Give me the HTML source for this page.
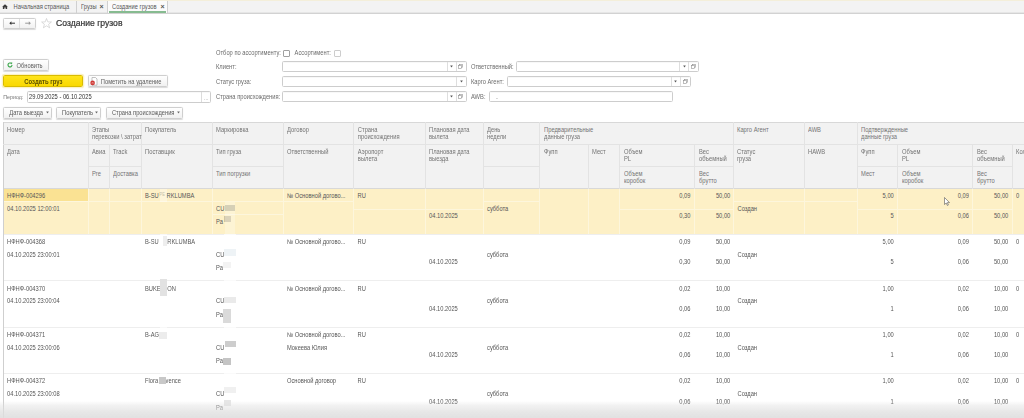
<!DOCTYPE html>
<html><head><meta charset="utf-8">
<style>
html,body{margin:0;padding:0;}
body{width:1024px;height:418px;overflow:hidden;position:relative;background:#fff;font-family:"Liberation Sans",sans-serif;}
.t{position:absolute;white-space:nowrap;font-size:5.75px;line-height:10px;height:10px;color:#565656;transform:scaleY(1.12);transform-origin:0 50%;}
.r{text-align:right;}
.b{position:absolute;box-sizing:border-box;}
.h{color:#747474;}
.btn{position:absolute;box-sizing:border-box;border:1px solid #cfcfcf;border-radius:1.5px;background:linear-gradient(#ffffff,#f1f1f1);box-shadow:0 0.5px 1px rgba(0,0,0,0.15);}
.inp{position:absolute;box-sizing:border-box;border:1px solid #cdcdcd;background:#fff;border-radius:1.5px;box-shadow:inset 0 0.5px 0.5px rgba(0,0,0,0.06);}
#w{position:absolute;left:0;top:0;width:1024px;height:418px;filter:blur(0.3px);}
.h{font-size:5.8px;}
.bl,.bl2,.bl3{color:transparent;background:rgba(200,200,200,0.55);filter:blur(0.6px);}
</style></head><body><div id="w">

<div class="b" style="left:0.0px;top:0.0px;width:1024.0px;height:1.0px;background:#f4efda"></div>
<div class="b" style="left:0.0px;top:1.0px;width:1024.0px;height:12.5px;background:#f3f3f3"></div>
<div class="b" style="left:0.0px;top:12.0px;width:1024.0px;height:1.0px;background:#e6e6e6"></div>
<div class="b" style="left:0.0px;top:13.0px;width:1024.0px;height:1.0px;background:#d2d2d2"></div>
<svg class="b" style="left:2.4px;top:3.6px" width="6" height="5.4" viewBox="0 0 7 6"><path d="M3.5 0.2 L0.2 3 L1 3 L1 5.8 L2.8 5.8 L2.8 4 L4.2 4 L4.2 5.8 L6 5.8 L6 3 L6.8 3 Z" fill="#3c3c3c"/></svg>
<div class="t " style="left:13.5px;top:2.4px;color:#555">Начальная страница</div>
<div class="b" style="left:76.0px;top:1.0px;width:1.0px;height:12.0px;background:#d0d0d0"></div>
<div class="t " style="left:81.0px;top:2.4px;color:#555">Грузы</div>
<div class="t " style="left:99.5px;top:2.4px;color:#555;font-size:7px;font-weight:bold">×</div>
<div class="b" style="left:107.0px;top:1.0px;width:1.0px;height:12.0px;background:#d0d0d0"></div>
<div class="b" style="left:108.2px;top:1.0px;width:59.1px;height:12.0px;background:#fbfbfb"></div>
<div class="t " style="left:112.0px;top:2.4px;color:#555">Создание грузов</div>
<div class="t " style="left:160.5px;top:2.4px;color:#555;font-size:7px;font-weight:bold">×</div>
<div class="b" style="left:167.0px;top:1.0px;width:1.0px;height:12.0px;background:#d0d0d0"></div>
<div class="b" style="left:109.2px;top:11.4px;width:57.0px;height:1.3px;background:#86bb90"></div>
<div class="btn" style="left:3.2px;top:18px;width:32.4px;height:10.7px"></div>
<div class="b" style="left:19.0px;top:18.5px;width:1.0px;height:9.5px;background:#dedede"></div>
<svg class="b" style="left:8.7px;top:21.2px" width="6.2" height="4.4" viewBox="0 0 6.2 4.4"><path d="M0.3 2.2 L2.4 0.3 L2.4 4.1 Z" fill="#333"/><path d="M1.5 2.2 L6 2.2" stroke="#333" stroke-width="1" fill="none"/></svg>
<svg class="b" style="left:24.5px;top:21.2px" width="6.2" height="4.4" viewBox="0 0 6.2 4.4"><path d="M5.9 2.2 L3.8 0.3 L3.8 4.1 Z" fill="#999"/><path d="M0.2 2.2 L4.7 2.2" stroke="#999" stroke-width="1" fill="none"/></svg>
<svg class="b" style="left:40.5px;top:18px" width="11" height="10.5" viewBox="0 0 22 21"><path d="M11 1 L13.6 7.8 L20.8 8 L15.2 12.6 L17.2 19.6 L11 15.6 L4.8 19.6 L6.8 12.6 L1.2 8 L8.4 7.8 Z" stroke="#c4c4c4" stroke-width="1.2" fill="none"/></svg>
<div class="t " style="left:56.0px;top:18.3px;font-size:8.6px;color:#383838;-webkit-text-stroke:0.22px #383838">Создание грузов</div>
<div class="btn" style="left:3.2px;top:59.2px;width:45.4px;height:11.4px"></div>
<svg class="b" style="left:7px;top:62px" width="6" height="6" viewBox="0 0 12 12"><path d="M10 6 A4 4 0 1 1 8.5 2.8" stroke="#3aa64a" stroke-width="2.2" fill="none"/><path d="M7 0.5 L11 1.5 L9 5 Z" fill="#3aa64a"/></svg>
<div class="t " style="left:16.5px;top:60.6px;color:#606060">Обновить</div>
<div class="b" style="left:3.2px;top:75.3px;width:79.8px;height:11.7px;background:linear-gradient(#ffe41a,#f9d800);border:1px solid #d9bc00;border-radius:1.5px;box-shadow:0 0 0 1.3px #fbf1c6"></div>
<div class="t " style="left:24.2px;top:76.6px;font-size:5.95px;font-weight:bold;color:#5b5000">Создать груз</div>
<div class="btn" style="left:88px;top:75.4px;width:80px;height:11.8px"></div>
<svg class="b" style="left:90.4px;top:76.6px" width="7.5" height="9" viewBox="0 0 7.5 9"><path d="M2 0.5 L5.5 0.5 L7 2 L7 8.2 L2 8.2 Z" fill="#fff" stroke="#9a9a9a" stroke-width="0.6"/><circle cx="2.6" cy="5.9" r="2.3" fill="#cf3a36"/><path d="M1.9 5.2 L3.3 6.6 M3.3 5.2 L1.9 6.6" stroke="#f6d0d0" stroke-width="0.55"/></svg>
<div class="t " style="left:100.8px;top:76.7px;color:#606060">Пометить на удаление</div>
<div class="t " style="left:3.2px;top:92.2px;color:#777;font-size:5.35px">Период:</div>
<div class="inp" style="left:27px;top:91.2px;width:184.2px;height:11.6px"></div>
<div class="b" style="left:201.0px;top:92.0px;width:1.0px;height:10.0px;background:#dcdcdc"></div>
<div class="t " style="left:204.0px;top:92.9px;color:#888;font-size:5px">...</div>
<div class="t " style="left:29.0px;top:92.3px;color:#333">29.09.2025 - 06.10.2025</div>
<div class="btn" style="left:3.3px;top:106.5px;width:48.7px;height:12px"></div>
<div class="t " style="left:9.3px;top:107.9px;color:#5a5a5a">Дата выезда</div>
<svg class="b" style="left:46.0px;top:111.3px" width="3" height="3" viewBox="0 0 3 3"><path d="M0.2 0.6 L2.8 0.6 L1.5 2.6 Z" fill="#666"/></svg>
<div class="btn" style="left:56.1px;top:106.5px;width:45.1px;height:12px"></div>
<div class="t " style="left:62.1px;top:107.9px;color:#5a5a5a">Покупатель</div>
<svg class="b" style="left:95.2px;top:111.3px" width="3" height="3" viewBox="0 0 3 3"><path d="M0.2 0.6 L2.8 0.6 L1.5 2.6 Z" fill="#666"/></svg>
<div class="btn" style="left:105.9px;top:106.5px;width:77.1px;height:12px"></div>
<div class="t " style="left:111.9px;top:107.9px;color:#5a5a5a">Страна происхождения</div>
<svg class="b" style="left:177.0px;top:111.3px" width="3" height="3" viewBox="0 0 3 3"><path d="M0.2 0.6 L2.8 0.6 L1.5 2.6 Z" fill="#666"/></svg>
<div class="t " style="left:216.0px;top:48.3px;color:#6c6c6c">Отбор по ассортименту:</div>
<div class="b" style="left:283.2px;top:49.8px;width:6.6px;height:6.8px;border:1px solid #a0a0a0;background:#fff;border-radius:1px"></div>
<div class="t " style="left:294.6px;top:48.3px;color:#6c6c6c">Ассортимент:</div>
<div class="b" style="left:334.2px;top:49.8px;width:6.6px;height:6.8px;border:1px solid #cdcdcd;background:#fff;border-radius:1px"></div>
<div class="t " style="left:216.0px;top:62.1px;color:#6c6c6c">Клиент:</div>
<div class="inp" style="left:282.4px;top:61.1px;width:184.2px;height:11.3px"></div>
<div class="b" style="left:456.0px;top:62.1px;width:1.0px;height:9.3px;background:#dedede"></div>
<svg class="b" style="left:458.3px;top:64.1px" width="5" height="5" viewBox="0 0 10 10"><rect x="3" y="0.8" width="6" height="6" fill="none" stroke="#888" stroke-width="1.1"/><rect x="1" y="3" width="6" height="6" fill="#fff" stroke="#888" stroke-width="1.1"/></svg>
<div class="b" style="left:447.0px;top:62.1px;width:1.0px;height:9.3px;background:#dedede"></div>
<svg class="b" style="left:450.1px;top:65.3px" width="3" height="3" viewBox="0 0 3 3"><path d="M0.2 0.5 L2.8 0.5 L1.5 2.6 Z" fill="#555"/></svg>
<div class="t " style="left:216.0px;top:76.9px;color:#6c6c6c">Статус груза:</div>
<div class="inp" style="left:282.4px;top:76.2px;width:184.2px;height:11.3px"></div>
<div class="b" style="left:456.0px;top:77.2px;width:1.0px;height:9.3px;background:#dedede"></div>
<svg class="b" style="left:460.1px;top:80.4px" width="3" height="3" viewBox="0 0 3 3"><path d="M0.2 0.5 L2.8 0.5 L1.5 2.6 Z" fill="#555"/></svg>
<div class="t " style="left:216.0px;top:92.2px;color:#6c6c6c">Страна происхождения:</div>
<div class="inp" style="left:282.4px;top:91.2px;width:184.2px;height:11.3px"></div>
<div class="b" style="left:456.0px;top:92.2px;width:1.0px;height:9.3px;background:#dedede"></div>
<svg class="b" style="left:458.3px;top:94.2px" width="5" height="5" viewBox="0 0 10 10"><rect x="3" y="0.8" width="6" height="6" fill="none" stroke="#888" stroke-width="1.1"/><rect x="1" y="3" width="6" height="6" fill="#fff" stroke="#888" stroke-width="1.1"/></svg>
<div class="b" style="left:447.0px;top:92.2px;width:1.0px;height:9.3px;background:#dedede"></div>
<svg class="b" style="left:450.1px;top:95.4px" width="3" height="3" viewBox="0 0 3 3"><path d="M0.2 0.5 L2.8 0.5 L1.5 2.6 Z" fill="#555"/></svg>
<div class="t " style="left:471.0px;top:62.1px;color:#6c6c6c">Ответственный:</div>
<div class="inp" style="left:515.5px;top:61.1px;width:183.7px;height:11.3px"></div>
<div class="b" style="left:688.0px;top:62.1px;width:1.0px;height:9.3px;background:#dedede"></div>
<svg class="b" style="left:690.9px;top:64.1px" width="5" height="5" viewBox="0 0 10 10"><rect x="3" y="0.8" width="6" height="6" fill="none" stroke="#888" stroke-width="1.1"/><rect x="1" y="3" width="6" height="6" fill="#fff" stroke="#888" stroke-width="1.1"/></svg>
<div class="b" style="left:679.0px;top:62.1px;width:1.0px;height:9.3px;background:#dedede"></div>
<svg class="b" style="left:682.7px;top:65.3px" width="3" height="3" viewBox="0 0 3 3"><path d="M0.2 0.5 L2.8 0.5 L1.5 2.6 Z" fill="#555"/></svg>
<div class="t " style="left:471.0px;top:76.9px;color:#6c6c6c">Карго Агент:</div>
<div class="inp" style="left:507.2px;top:76.2px;width:183.6px;height:11.3px"></div>
<div class="b" style="left:680.0px;top:77.2px;width:1.0px;height:9.3px;background:#dedede"></div>
<svg class="b" style="left:682.5px;top:79.2px" width="5" height="5" viewBox="0 0 10 10"><rect x="3" y="0.8" width="6" height="6" fill="none" stroke="#888" stroke-width="1.1"/><rect x="1" y="3" width="6" height="6" fill="#fff" stroke="#888" stroke-width="1.1"/></svg>
<div class="b" style="left:671.0px;top:77.2px;width:1.0px;height:9.3px;background:#dedede"></div>
<svg class="b" style="left:674.3px;top:80.4px" width="3" height="3" viewBox="0 0 3 3"><path d="M0.2 0.5 L2.8 0.5 L1.5 2.6 Z" fill="#555"/></svg>
<div class="t " style="left:471.0px;top:92.2px;color:#6c6c6c">AWB:</div>
<div class="inp" style="left:489.3px;top:91.2px;width:183.4px;height:11.3px"></div>
<div class="t " style="left:496.0px;top:92.7px;color:#999">-</div>
<div class="b" style="left:3.0px;top:122.3px;width:1021.0px;height:66.4px;background:#f2f2f2"></div>
<div class="b" style="left:3.0px;top:122.0px;width:1021.0px;height:1.0px;background:#d8d8d8"></div>
<div class="b" style="left:3.0px;top:188.0px;width:1021.0px;height:1.0px;background:#d8d8d8"></div>
<div class="b" style="left:3.0px;top:122.3px;width:1.0px;height:295.7px;background:#cfcfcf"></div>
<div class="b" style="left:88.0px;top:122.3px;width:1.0px;height:66.4px;background:#e3e3e3"></div>
<div class="b" style="left:141.0px;top:122.3px;width:1.0px;height:66.4px;background:#e3e3e3"></div>
<div class="b" style="left:212.0px;top:122.3px;width:1.0px;height:66.4px;background:#e3e3e3"></div>
<div class="b" style="left:283.0px;top:122.3px;width:1.0px;height:66.4px;background:#e3e3e3"></div>
<div class="b" style="left:353.0px;top:122.3px;width:1.0px;height:66.4px;background:#e3e3e3"></div>
<div class="b" style="left:425.0px;top:122.3px;width:1.0px;height:66.4px;background:#e3e3e3"></div>
<div class="b" style="left:483.0px;top:122.3px;width:1.0px;height:66.4px;background:#e3e3e3"></div>
<div class="b" style="left:539.0px;top:122.3px;width:1.0px;height:66.4px;background:#e3e3e3"></div>
<div class="b" style="left:733.0px;top:122.3px;width:1.0px;height:66.4px;background:#e3e3e3"></div>
<div class="b" style="left:804.0px;top:122.3px;width:1.0px;height:66.4px;background:#e3e3e3"></div>
<div class="b" style="left:857.0px;top:122.3px;width:1.0px;height:66.4px;background:#e3e3e3"></div>
<div class="b" style="left:1012.0px;top:144.4px;width:1.0px;height:44.3px;background:#e3e3e3"></div>
<div class="b" style="left:109.0px;top:144.4px;width:1.0px;height:44.3px;background:#e3e3e3"></div>
<div class="b" style="left:588.0px;top:144.4px;width:1.0px;height:44.3px;background:#e3e3e3"></div>
<div class="b" style="left:619.0px;top:144.4px;width:1.0px;height:44.3px;background:#e3e3e3"></div>
<div class="b" style="left:694.0px;top:144.4px;width:1.0px;height:44.3px;background:#e3e3e3"></div>
<div class="b" style="left:897.0px;top:144.4px;width:1.0px;height:44.3px;background:#e3e3e3"></div>
<div class="b" style="left:972.0px;top:144.4px;width:1.0px;height:44.3px;background:#e3e3e3"></div>
<div class="b" style="left:3.0px;top:144.0px;width:85.0px;height:1.0px;background:#e3e3e3"></div>
<div class="b" style="left:88.0px;top:144.0px;width:53.2px;height:1.0px;background:#e3e3e3"></div>
<div class="b" style="left:88.0px;top:166.0px;width:53.2px;height:1.0px;background:#e3e3e3"></div>
<div class="b" style="left:141.2px;top:144.0px;width:70.8px;height:1.0px;background:#e3e3e3"></div>
<div class="b" style="left:212.0px;top:144.0px;width:71.3px;height:1.0px;background:#e3e3e3"></div>
<div class="b" style="left:212.0px;top:166.0px;width:71.3px;height:1.0px;background:#e3e3e3"></div>
<div class="b" style="left:283.3px;top:144.0px;width:69.8px;height:1.0px;background:#e3e3e3"></div>
<div class="b" style="left:353.1px;top:144.0px;width:72.2px;height:1.0px;background:#e3e3e3"></div>
<div class="b" style="left:425.3px;top:144.0px;width:58.2px;height:1.0px;background:#e3e3e3"></div>
<div class="b" style="left:483.5px;top:144.0px;width:56.1px;height:1.0px;background:#e3e3e3"></div>
<div class="b" style="left:483.5px;top:166.0px;width:56.1px;height:1.0px;background:#e3e3e3"></div>
<div class="b" style="left:539.6px;top:144.0px;width:194.0px;height:1.0px;background:#e3e3e3"></div>
<div class="b" style="left:619.6px;top:166.0px;width:114.0px;height:1.0px;background:#e3e3e3"></div>
<div class="b" style="left:733.6px;top:144.0px;width:70.6px;height:1.0px;background:#e3e3e3"></div>
<div class="b" style="left:804.2px;top:144.0px;width:53.1px;height:1.0px;background:#e3e3e3"></div>
<div class="b" style="left:857.3px;top:144.0px;width:166.7px;height:1.0px;background:#e3e3e3"></div>
<div class="b" style="left:857.3px;top:166.0px;width:155.1px;height:1.0px;background:#e3e3e3"></div>
<div class="t h" style="left:7.0px;top:124.9px;">Номер</div>
<div class="t h" style="left:92.0px;top:124.9px;">Этапы</div>
<div class="t h" style="left:92.0px;top:131.9px;">перевозки \ затрат</div>
<div class="t h" style="left:145.0px;top:124.9px;">Покупатель</div>
<div class="t h" style="left:216.0px;top:124.9px;">Маркировка</div>
<div class="t h" style="left:287.0px;top:124.9px;">Договор</div>
<div class="t h" style="left:357.8px;top:124.9px;">Страна</div>
<div class="t h" style="left:357.8px;top:131.9px;">происхождения</div>
<div class="t h" style="left:429.0px;top:124.9px;">Плановая дата</div>
<div class="t h" style="left:429.0px;top:131.9px;">вылета</div>
<div class="t h" style="left:487.0px;top:124.9px;">День</div>
<div class="t h" style="left:487.0px;top:131.9px;">недели</div>
<div class="t h" style="left:544.0px;top:124.9px;">Предварительные</div>
<div class="t h" style="left:544.0px;top:131.9px;">данные груза</div>
<div class="t h" style="left:737.0px;top:124.9px;">Карго Агент</div>
<div class="t h" style="left:808.0px;top:124.9px;">AWB</div>
<div class="t h" style="left:861.0px;top:124.9px;">Подтвержденные</div>
<div class="t h" style="left:861.0px;top:131.9px;">данные груза</div>
<div class="t h" style="left:7.0px;top:146.9px;">Дата</div>
<div class="t h" style="left:92.0px;top:146.9px;">Авиа</div>
<div class="t h" style="left:113.0px;top:146.9px;">Track</div>
<div class="t h" style="left:145.0px;top:146.9px;">Поставщик</div>
<div class="t h" style="left:216.0px;top:146.9px;">Тип груза</div>
<div class="t h" style="left:287.0px;top:146.9px;">Ответственный</div>
<div class="t h" style="left:357.8px;top:146.9px;">Аэропорт</div>
<div class="t h" style="left:357.8px;top:153.9px;">вылета</div>
<div class="t h" style="left:429.0px;top:146.9px;">Плановая дата</div>
<div class="t h" style="left:429.0px;top:153.9px;">выезда</div>
<div class="t h" style="left:544.0px;top:146.9px;">Фупп</div>
<div class="t h" style="left:592.0px;top:146.9px;">Мест</div>
<div class="t h" style="left:624.0px;top:146.9px;">Объем</div>
<div class="t h" style="left:624.0px;top:153.9px;">PL</div>
<div class="t h" style="left:699.0px;top:146.9px;">Вес</div>
<div class="t h" style="left:699.0px;top:153.9px;">объемный</div>
<div class="t h" style="left:737.0px;top:146.9px;">Статус</div>
<div class="t h" style="left:737.0px;top:153.9px;">груза</div>
<div class="t h" style="left:808.0px;top:146.9px;">HAWB</div>
<div class="t h" style="left:861.0px;top:146.9px;">Фупп</div>
<div class="t h" style="left:902.0px;top:146.9px;">Объем</div>
<div class="t h" style="left:902.0px;top:153.9px;">PL</div>
<div class="t h" style="left:977.0px;top:146.9px;">Вес</div>
<div class="t h" style="left:977.0px;top:153.9px;">объемный</div>
<div class="t h" style="left:1016.0px;top:146.9px;">Кол</div>
<div class="t h" style="left:92.0px;top:168.9px;">Pre</div>
<div class="t h" style="left:113.0px;top:168.9px;">Доставка</div>
<div class="t h" style="left:216.0px;top:168.9px;">Тип погрузки</div>
<div class="t h" style="left:624.0px;top:168.9px;">Объем</div>
<div class="t h" style="left:624.0px;top:175.9px;">коробок</div>
<div class="t h" style="left:699.0px;top:168.9px;">Вес</div>
<div class="t h" style="left:699.0px;top:175.9px;">брутто</div>
<div class="t h" style="left:861.0px;top:168.9px;">Мест</div>
<div class="t h" style="left:902.0px;top:168.9px;">Объем</div>
<div class="t h" style="left:902.0px;top:175.9px;">коробок</div>
<div class="t h" style="left:977.0px;top:168.9px;">Вес</div>
<div class="t h" style="left:977.0px;top:175.9px;">брутто</div>
<div class="b" style="left:3.5px;top:188.7px;width:1020.5px;height:46.2px;background:#fdf0c6"></div>
<div class="b" style="left:3.5px;top:189.2px;width:84.5px;height:12.0px;background:#fae293"></div>
<div class="b" style="left:88.0px;top:188.7px;width:1.0px;height:46.2px;background:#fdf6dc"></div>
<div class="b" style="left:141.0px;top:188.7px;width:1.0px;height:46.2px;background:#fdf6dc"></div>
<div class="b" style="left:212.0px;top:188.7px;width:1.0px;height:46.2px;background:#fdf6dc"></div>
<div class="b" style="left:283.0px;top:188.7px;width:1.0px;height:46.2px;background:#fdf6dc"></div>
<div class="b" style="left:353.0px;top:188.7px;width:1.0px;height:46.2px;background:#fdf6dc"></div>
<div class="b" style="left:425.0px;top:188.7px;width:1.0px;height:46.2px;background:#fdf6dc"></div>
<div class="b" style="left:483.0px;top:188.7px;width:1.0px;height:46.2px;background:#fdf6dc"></div>
<div class="b" style="left:539.0px;top:188.7px;width:1.0px;height:46.2px;background:#fdf6dc"></div>
<div class="b" style="left:733.0px;top:188.7px;width:1.0px;height:46.2px;background:#fdf6dc"></div>
<div class="b" style="left:804.0px;top:188.7px;width:1.0px;height:46.2px;background:#fdf6dc"></div>
<div class="b" style="left:857.0px;top:188.7px;width:1.0px;height:46.2px;background:#fdf6dc"></div>
<div class="b" style="left:1012.0px;top:188.7px;width:1.0px;height:46.2px;background:#fdf6dc"></div>
<div class="b" style="left:109.0px;top:188.7px;width:1.0px;height:46.2px;background:#fdf6dc"></div>
<div class="b" style="left:588.0px;top:188.7px;width:1.0px;height:46.2px;background:#fdf6dc"></div>
<div class="b" style="left:619.0px;top:188.7px;width:1.0px;height:46.2px;background:#fdf6dc"></div>
<div class="b" style="left:694.0px;top:188.7px;width:1.0px;height:46.2px;background:#fdf6dc"></div>
<div class="b" style="left:897.0px;top:188.7px;width:1.0px;height:46.2px;background:#fdf6dc"></div>
<div class="b" style="left:972.0px;top:188.7px;width:1.0px;height:46.2px;background:#fdf6dc"></div>
<div class="b" style="left:3.5px;top:201.0px;width:349.6px;height:1.0px;background:#fdf6dc"></div>
<div class="b" style="left:212.0px;top:214.0px;width:71.3px;height:1.0px;background:#fdf6dc"></div>
<div class="b" style="left:353.1px;top:209.0px;width:130.4px;height:1.0px;background:#fdf6dc"></div>
<div class="b" style="left:483.5px;top:201.0px;width:56.1px;height:1.0px;background:#fdf6dc"></div>
<div class="b" style="left:619.6px;top:209.0px;width:114.0px;height:1.0px;background:#fdf6dc"></div>
<div class="b" style="left:733.6px;top:201.0px;width:123.7px;height:1.0px;background:#fdf6dc"></div>
<div class="b" style="left:857.3px;top:209.0px;width:155.1px;height:1.0px;background:#fdf6dc"></div>
<div class="t " style="left:7.0px;top:191.3px;">НФНФ-004296</div>
<div class="t " style="left:7.0px;top:204.1px;">04.10.2025 12:00:01</div>
<div class="t " style="left:145.0px;top:191.3px;">B-SU</div>
<div class="t " style="left:166.5px;top:191.3px;">RKLUMBA</div>
<div class="t " style="left:159.5px;top:190.1px;font-size:4px;color:#a89f80">PE</div>
<div class="t " style="left:216.0px;top:204.1px;">CU</div>
<div class="t " style="left:216.0px;top:217.4px;">Pa</div>
<div class="b" style="left:160.0px;top:189.0px;width:6.5px;height:13.0px;background:rgba(255,255,255,0.35)"></div>
<div class="b" style="left:224.6px;top:205.0px;width:10.8px;height:5.8px;background:#c9c09e"></div>
<div class="b" style="left:224.0px;top:216.0px;width:7.0px;height:6.0px;background:#cfc5a3"></div>
<div class="b" style="left:224.6px;top:201.5px;width:10.8px;height:32.5px;background:rgba(255,255,255,0.25)"></div>
<div class="t " style="left:287.0px;top:191.3px;">№ Основной догово...</div>
<div class="t " style="left:357.5px;top:191.3px;">RU</div>
<div class="t " style="left:429.0px;top:211.4px;">04.10.2025</div>
<div class="t " style="left:487.0px;top:204.1px;">суббота</div>
<div class="t r " style="right:333.5px;top:191.3px;">0,09</div>
<div class="t r " style="right:293.7px;top:191.3px;">50,00</div>
<div class="t r " style="right:333.5px;top:211.4px;">0,30</div>
<div class="t r " style="right:293.7px;top:211.4px;">50,00</div>
<div class="t " style="left:737.5px;top:204.1px;">Создан</div>
<div class="t r " style="right:130.2px;top:191.3px;">5,00</div>
<div class="t r " style="right:55.0px;top:191.3px;">0,09</div>
<div class="t r " style="right:15.7px;top:191.3px;">50,00</div>
<div class="t r " style="right:130.2px;top:211.4px;">5</div>
<div class="t r " style="right:55.0px;top:211.4px;">0,06</div>
<div class="t r " style="right:15.7px;top:211.4px;">50,00</div>
<div class="t " style="left:1016.0px;top:191.3px;">0</div>
<div class="b" style="left:3.5px;top:234.0px;width:1020.5px;height:1.0px;background:#eeeeee"></div>
<div class="b" style="left:223.5px;top:234.0px;width:12.5px;height:1.0px;background:#fafafa"></div>
<div class="b" style="left:160.0px;top:234.0px;width:7.0px;height:1.0px;background:#f8f8f8"></div>
<div class="t " style="left:7.0px;top:237.3px;">НФНФ-004368</div>
<div class="t " style="left:7.0px;top:250.1px;">04.10.2025 23:00:01</div>
<div class="t " style="left:145.0px;top:237.3px;">B-SU</div>
<div class="t " style="left:167.3px;top:237.3px;">RKLUMBA</div>
<div class="t " style="left:216.0px;top:250.1px;">CU</div>
<div class="t " style="left:216.0px;top:263.4px;">Pa</div>
<div class="b" style="left:162.7px;top:236.0px;width:4.6px;height:10.0px;background:#eeeeee"></div>
<div class="b" style="left:224.0px;top:249.0px;width:11.5px;height:7.0px;background:#eef3f6"></div>
<div class="b" style="left:223.0px;top:262.0px;width:8.0px;height:6.0px;background:#f3f3f3"></div>
<div class="t " style="left:287.0px;top:237.3px;">№ Основной догово...</div>
<div class="t " style="left:357.5px;top:237.3px;">RU</div>
<div class="t " style="left:429.0px;top:257.4px;">04.10.2025</div>
<div class="t " style="left:487.0px;top:250.1px;">суббота</div>
<div class="t r " style="right:333.5px;top:237.3px;">0,09</div>
<div class="t r " style="right:293.7px;top:237.3px;">50,00</div>
<div class="t r " style="right:333.5px;top:257.4px;">0,30</div>
<div class="t r " style="right:293.7px;top:257.4px;">50,00</div>
<div class="t " style="left:737.5px;top:250.1px;">Создан</div>
<div class="t r " style="right:130.2px;top:237.3px;">5,00</div>
<div class="t r " style="right:55.0px;top:237.3px;">0,09</div>
<div class="t r " style="right:15.7px;top:237.3px;">50,00</div>
<div class="t r " style="right:130.2px;top:257.4px;">5</div>
<div class="t r " style="right:55.0px;top:257.4px;">0,06</div>
<div class="t r " style="right:15.7px;top:257.4px;">50,00</div>
<div class="t " style="left:1016.0px;top:237.3px;">0</div>
<div class="b" style="left:3.5px;top:280.0px;width:1020.5px;height:1.0px;background:#eeeeee"></div>
<div class="b" style="left:223.5px;top:280.0px;width:12.5px;height:1.0px;background:#fafafa"></div>
<div class="b" style="left:160.0px;top:280.0px;width:7.0px;height:1.0px;background:#f8f8f8"></div>
<div class="t " style="left:7.0px;top:283.6px;">НФНФ-004370</div>
<div class="t " style="left:7.0px;top:296.4px;">04.10.2025 23:00:04</div>
<div class="t " style="left:145.0px;top:283.6px;">BUKE</div>
<div class="t " style="left:167.3px;top:283.6px;">ON</div>
<div class="t " style="left:216.0px;top:296.4px;">CU</div>
<div class="t " style="left:216.0px;top:309.7px;">Pa</div>
<div class="b" style="left:160.0px;top:279.0px;width:7.3px;height:17.0px;background:#e2e2e2"></div>
<div class="b" style="left:224.0px;top:297.0px;width:12.0px;height:6.0px;background:#eaeaea"></div>
<div class="b" style="left:223.0px;top:309.0px;width:8.0px;height:13.5px;background:#dadada"></div>
<div class="t " style="left:287.0px;top:283.6px;">№ Основной догово...</div>
<div class="t " style="left:357.5px;top:283.6px;">RU</div>
<div class="t " style="left:429.0px;top:303.7px;">04.10.2025</div>
<div class="t " style="left:487.0px;top:296.4px;">суббота</div>
<div class="t r " style="right:333.5px;top:283.6px;">0,02</div>
<div class="t r " style="right:293.7px;top:283.6px;">10,00</div>
<div class="t r " style="right:333.5px;top:303.7px;">0,06</div>
<div class="t r " style="right:293.7px;top:303.7px;">10,00</div>
<div class="t " style="left:737.5px;top:296.4px;">Создан</div>
<div class="t r " style="right:130.2px;top:283.6px;">1,00</div>
<div class="t r " style="right:55.0px;top:283.6px;">0,02</div>
<div class="t r " style="right:15.7px;top:283.6px;">10,00</div>
<div class="t r " style="right:130.2px;top:303.7px;">1</div>
<div class="t r " style="right:55.0px;top:303.7px;">0,06</div>
<div class="t r " style="right:15.7px;top:303.7px;">10,00</div>
<div class="t " style="left:1016.0px;top:283.6px;">0</div>
<div class="b" style="left:3.5px;top:327.0px;width:1020.5px;height:1.0px;background:#eeeeee"></div>
<div class="b" style="left:223.5px;top:327.0px;width:12.5px;height:1.0px;background:#fafafa"></div>
<div class="b" style="left:160.0px;top:327.0px;width:7.0px;height:1.0px;background:#f8f8f8"></div>
<div class="t " style="left:7.0px;top:330.1px;">НФНФ-004371</div>
<div class="t " style="left:7.0px;top:342.9px;">04.10.2025 23:00:06</div>
<div class="t " style="left:145.0px;top:330.1px;">B-AG</div>
<div class="t " style="left:216.0px;top:342.9px;">CU</div>
<div class="t " style="left:216.0px;top:356.2px;">Pa</div>
<div class="b" style="left:159.0px;top:331.7px;width:7.7px;height:7.8px;background:#ececec"></div>
<div class="b" style="left:224.6px;top:340.6px;width:11.2px;height:6.7px;background:#cdcdcd"></div>
<div class="b" style="left:222.8px;top:358.4px;width:8.1px;height:6.6px;background:#c4c4c4"></div>
<div class="t " style="left:287.0px;top:330.1px;">№ Основной догово...</div>
<div class="t " style="left:287.0px;top:342.9px;">Мокеева Юлия</div>
<div class="t " style="left:357.5px;top:330.1px;">RU</div>
<div class="t " style="left:429.0px;top:350.2px;">04.10.2025</div>
<div class="t " style="left:487.0px;top:342.9px;">суббота</div>
<div class="t r " style="right:333.5px;top:330.1px;">0,02</div>
<div class="t r " style="right:293.7px;top:330.1px;">10,00</div>
<div class="t r " style="right:333.5px;top:350.2px;">0,06</div>
<div class="t r " style="right:293.7px;top:350.2px;">10,00</div>
<div class="t " style="left:737.5px;top:342.9px;">Создан</div>
<div class="t r " style="right:130.2px;top:330.1px;">1,00</div>
<div class="t r " style="right:55.0px;top:330.1px;">0,02</div>
<div class="t r " style="right:15.7px;top:330.1px;">10,00</div>
<div class="t r " style="right:130.2px;top:350.2px;">1</div>
<div class="t r " style="right:55.0px;top:350.2px;">0,06</div>
<div class="t r " style="right:15.7px;top:350.2px;">10,00</div>
<div class="t " style="left:1016.0px;top:330.1px;">0</div>
<div class="b" style="left:3.5px;top:373.0px;width:1020.5px;height:1.0px;background:#eeeeee"></div>
<div class="b" style="left:223.5px;top:373.0px;width:12.5px;height:1.0px;background:#fafafa"></div>
<div class="b" style="left:160.0px;top:373.0px;width:7.0px;height:1.0px;background:#f8f8f8"></div>
<div class="t " style="left:7.0px;top:376.4px;">НФНФ-004372</div>
<div class="t " style="left:7.0px;top:389.2px;">04.10.2025 23:00:08</div>
<div class="t " style="left:145.0px;top:376.4px;">Flora</div>
<div class="t " style="left:165.6px;top:376.4px;">vence</div>
<div class="t " style="left:216.0px;top:389.2px;">CU</div>
<div class="t " style="left:216.0px;top:402.5px;">Pa</div>
<div class="b" style="left:159.0px;top:377.3px;width:6.6px;height:6.7px;background:#c8c8c8"></div>
<div class="b" style="left:224.0px;top:387.0px;width:12.0px;height:6.0px;background:#f0f0f0"></div>
<div class="b" style="left:224.0px;top:400.0px;width:7.0px;height:6.0px;background:#e6e6e6"></div>
<div class="t " style="left:287.0px;top:376.4px;">Основной договор</div>
<div class="t " style="left:357.5px;top:376.4px;">RU</div>
<div class="t " style="left:429.0px;top:396.5px;">04.10.2025</div>
<div class="t " style="left:487.0px;top:389.2px;">суббота</div>
<div class="t r " style="right:333.5px;top:376.4px;">0,02</div>
<div class="t r " style="right:293.7px;top:376.4px;">10,00</div>
<div class="t r " style="right:333.5px;top:396.5px;">0,06</div>
<div class="t r " style="right:293.7px;top:396.5px;">10,00</div>
<div class="t " style="left:737.5px;top:389.2px;">Создан</div>
<div class="t r " style="right:130.2px;top:376.4px;">1,00</div>
<div class="t r " style="right:55.0px;top:376.4px;">0,02</div>
<div class="t r " style="right:15.7px;top:376.4px;">10,00</div>
<div class="t r " style="right:130.2px;top:396.5px;">1</div>
<div class="t r " style="right:55.0px;top:396.5px;">0,06</div>
<div class="t r " style="right:15.7px;top:396.5px;">10,00</div>
<div class="t " style="left:1016.0px;top:376.4px;">0</div>
<svg class="b" style="left:944px;top:197px" width="6" height="9" viewBox="0 0 6 9"><path d="M0.5 0.5 L0.5 7.5 L2.2 6 L3.4 8.5 L4.4 8 L3.3 5.6 L5.5 5.6 Z" fill="#fff" stroke="#555" stroke-width="0.6"/></svg>
<div class="b" style="left:0;top:401px;width:1024px;height:17px;background:linear-gradient(rgba(222,222,222,0) 0%,rgba(222,222,222,0.35) 22%,rgba(222,222,222,0.7) 60%,rgba(222,222,222,0.9) 100%)"></div>
</div></body></html>
